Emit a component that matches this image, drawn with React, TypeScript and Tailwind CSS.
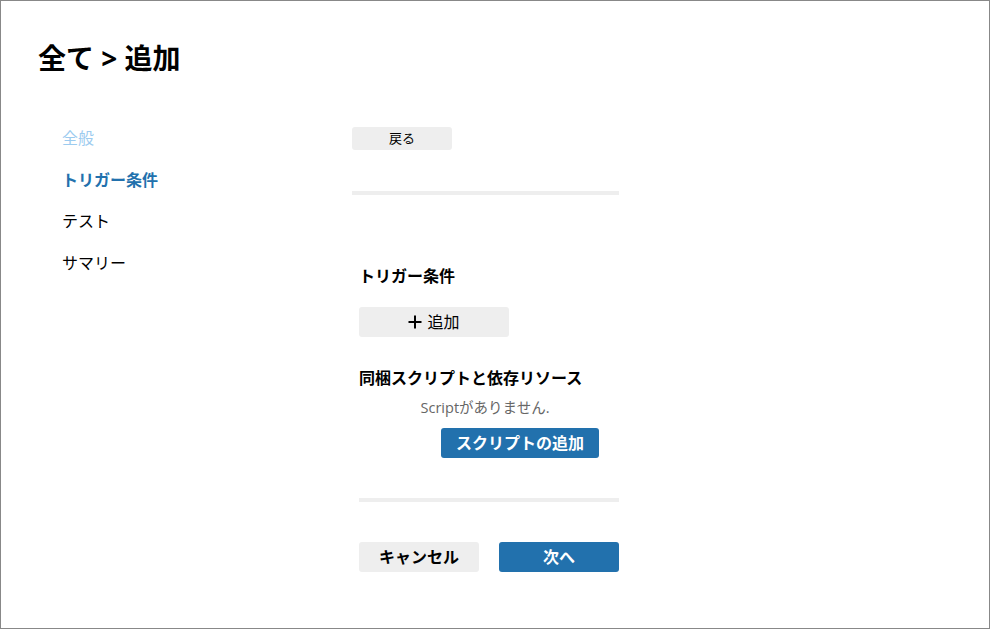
import React from "react";

const font = { fontFamily: '"Open Sans", "Noto Sans CJK JP", sans-serif' };

const navItems = [
  { label: "全般", cls: "text-[#9ccbef]" },
  { label: "トリガー条件", cls: "text-[#2271ad] font-bold" },
  { label: "テスト", cls: "text-black" },
  { label: "サマリー", cls: "text-black" },
];

export default function App() {
  return (
    <div
      style={font}
      className="w-[990px] h-[629px] border border-[#888888] bg-white text-black overflow-hidden"
    >
      {/* Header */}
      <h1 className="pl-[37px] pt-[39px] text-[28px] leading-[36px] font-bold">
        全て &gt; 追加
      </h1>

      <div className="flex mt-[51px]">
        {/* Sidebar */}
        <nav className="w-[351px] pl-[61px] flex flex-col gap-[17.7px] -mt-[1px]">
          {navItems.map((item) => (
            <div key={item.label} className={`text-[16px] leading-[24px] ${item.cls}`}>
              {item.label}
            </div>
          ))}
        </nav>

        {/* Main */}
        <main className="w-[267px] flex flex-col">
          <button className="w-[100px] h-[23px] rounded-[3px] bg-[#eeeeee] text-[13px] leading-[23px] text-black">
            戻る
          </button>
          <div className="mt-[41px] h-[4px] bg-[#eeeeee]" />

          <div className="pl-[7px] flex flex-col">
            <h2 className="mt-[69px] text-[16px] leading-[24px] font-bold">トリガー条件</h2>
            <button className="mt-[19px] w-[150px] h-[30px] rounded-[3px] bg-[#eeeeee] flex items-center justify-center gap-[5px] text-[16px]">
              <svg width="14" height="14" viewBox="0 0 14 14">
                <path d="M7 0.5v13M0.5 7h13" stroke="black" strokeWidth="2" />
              </svg>
              <span>追加</span>
            </button>

            <h2 className="mt-[29px] text-[16px] leading-[24px] font-bold">
              同梱スクリプトと依存リソース
            </h2>
            <p className="mt-[8px] pr-[8px] text-center text-[14.5px] leading-[20px] text-[#666666]">
              Scriptがありません.
            </p>
            <button className="mt-[10px] ml-[82px] w-[158px] h-[30px] rounded-[3px] bg-[#2271ad] text-white text-[16px] font-semibold">
              スクリプトの追加
            </button>

            <div className="mt-[40px] h-[4px] bg-[#eeeeee]" />

            <div className="mt-[40px] flex gap-[20px]">
              <button className="w-[120px] h-[30px] rounded-[3px] bg-[#eeeeee] text-[16px] font-bold">
                キャンセル
              </button>
              <button className="w-[120px] h-[30px] rounded-[3px] bg-[#2271ad] text-white text-[16px] font-bold">
                次へ
              </button>
            </div>
          </div>
        </main>
      </div>
    </div>
  );
}
